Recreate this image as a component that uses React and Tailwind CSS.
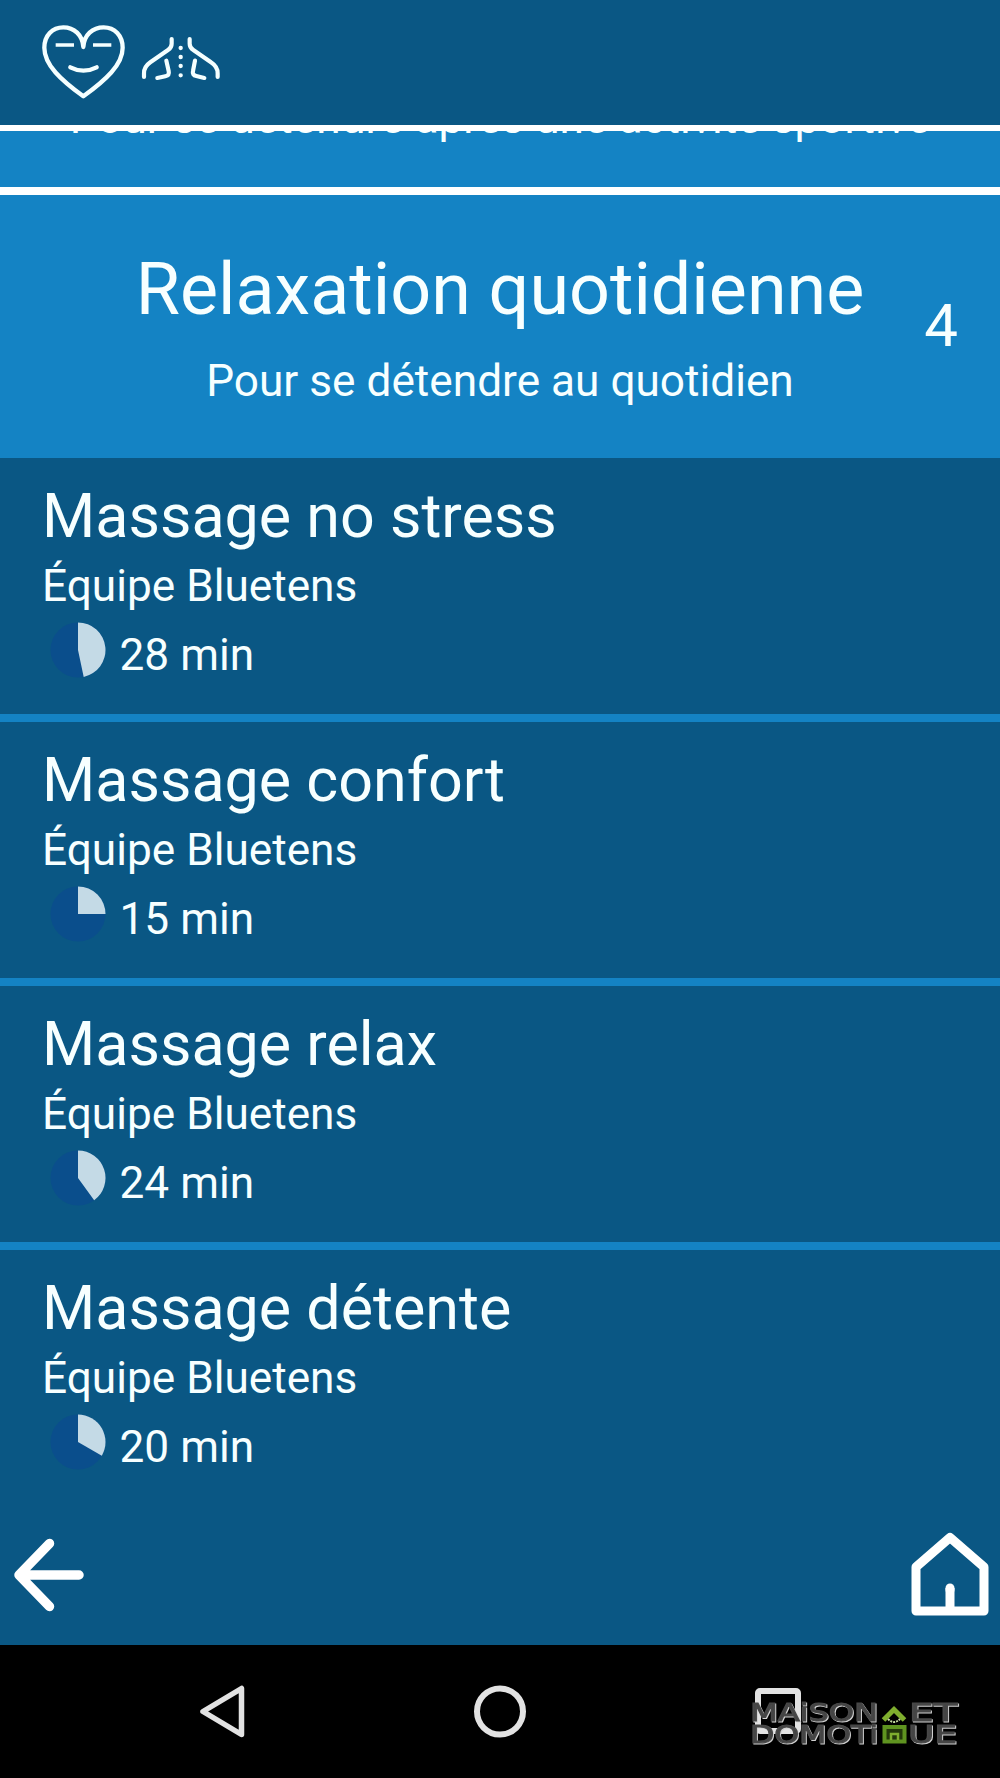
import React from 'react';

const programs = [
  { name: 'Massage no stress', author: 'Équipe Bluetens', minutes: 28 },
  { name: 'Massage confort', author: 'Équipe Bluetens', minutes: 15 },
  { name: 'Massage relax', author: 'Équipe Bluetens', minutes: 24 },
  { name: 'Massage détente', author: 'Équipe Bluetens', minutes: 20 },
];

// Share of an hour, starting at twelve o'clock
const DurationPie = ({ minutes }) => {
  const angle = (minutes / 60) * Math.PI * 2;
  const x = 28 + 27.5 * Math.sin(angle);
  const y = 28 - 27.5 * Math.cos(angle);
  return (
    <svg viewBox="0 0 56 56" className="w-14 h-14 shrink-0">
      <circle cx="28" cy="28" r="27.5" fill="#0a4e8c" />
      <path d={`M28 28V0.5A27.5 27.5 0 0 1 ${x} ${y}Z`} fill="#c4dae6" />
    </svg>
  );
};

const HeartIcon = () => (
  <svg
    viewBox="60 70 260 235"
    className="w-[86.67px] h-[78.33px]"
    fill="none"
    stroke="#f5ffff"
    strokeWidth="13"
    strokeLinecap="round"
    strokeLinejoin="round"
  >
    <path d="M190 142C188 106 162 83 130 83C97 83 73 108 73 144C73 196 124 242 190 290C256 242 308 196 308 144C308 108 284 83 251 83C218 83 192 106 190 142Z" />
    <path d="M112 136H157M224 136H269" strokeLinecap="square" strokeWidth="10" />
    <path d="M151 203Q190 223 230 203" />
  </svg>
);

const BackIcon = () => (
  <svg
    viewBox="360 105 245 140"
    className="w-[81.67px] h-[46.67px]"
    fill="none"
    stroke="#f5ffff"
    strokeWidth="12.5"
    strokeLinecap="round"
    strokeLinejoin="round"
  >
    <path d="M455 117V131Q455 143 444 150L391 187Q372 200 372 220V231" />
    <path d="M439 182L446 213Q449 226 436 229L412 234" />
    <path d="M509 117V131Q509 143 520 150L573 187Q593 200 593 220V231" />
    <path d="M525 182L519 213Q516 225 529 228L553 234" />
    <path d="M482 144h.1M482 171h.1M482 198h.1M482 226h.1" strokeWidth="13" />
  </svg>
);

const ProgramRow = ({ program }) => (
  <li className="h-[264px] pt-[23px] pl-[42px] border-b-8 border-[#1483c4] last:border-b-0">
    <h2 className="text-[61px] leading-[71px]">{program.name}</h2>
    <p className="mt-2 text-[44.200px] leading-[53px]">{program.author}</p>
    <div className="mt-[9px] flex items-start pl-2">
      <DurationPie minutes={program.minutes} />
      <span className="mt-[7px] ml-[13.500px] text-[44.200px] leading-[53px]">{program.minutes} min</span>
    </div>
  </li>
);

const Watermark = () => (
  <svg
    viewBox="748 1698 214 50"
    className="absolute left-[748px] top-[53px] w-[214px] h-[50px] font-['DejaVu_Sans']"
  >
    <g fontSize="24" fill="#444" stroke="#484848" strokeWidth="1.1" className="drop-shadow-[1px_1px_0_#d0d0d0]">
      <text x="750" y="1720.5" textLength="128" lengthAdjust="spacingAndGlyphs">MAiSON</text>
      <text x="909" y="1720.5" textLength="48" lengthAdjust="spacingAndGlyphs">ET</text>
      <text x="750" y="1743" textLength="128" lengthAdjust="spacingAndGlyphs">DOMOTi</text>
      <text x="908" y="1743" textLength="49" lengthAdjust="spacingAndGlyphs">UE</text>
    </g>
    <g fill="none" stroke="#7fae2e" strokeWidth="4">
      <path d="M883.500 1720L894 1709.500L904.500 1720" strokeWidth="5" />
      <path d="M888 1719Q894 1725 900 1719" stroke="#c4d9a0" strokeWidth="2" strokeDasharray="2 1" />
      <rect x="884.500" y="1727" width="20" height="14.500" fill="#24380b" stroke="#5f9320" />
      <path d="M891 1740V1734H898V1740" strokeWidth="2.5" />
    </g>
  </svg>
);

const App = () => {
  return (
    <div className="w-[1000px] h-[1778px] flex flex-col overflow-hidden bg-[#0a5784] text-[#f7ffff] font-['Roboto',sans-serif]">
      <header className="h-[125px] shrink-0 flex items-start pt-[23px] pl-10">
        <HeartIcon />
        <div className="pt-3 pl-[13.33px]">
          <BackIcon />
        </div>
      </header>

      {/* Previous category, scrolled under the header */}
      <section className="h-[70px] shrink-0 border-t-[6px] border-b-8 border-white bg-[#1483c4] overflow-hidden">
        <p className="-mt-[39px] text-center text-[44.200px] leading-[53px] whitespace-nowrap">
          Pour se détendre après une activité sportive
        </p>
      </section>

      <section className="h-[263px] shrink-0 grid grid-cols-[110px_1fr_110px] items-center bg-[#1483c4]">
        <div />
        <div className="pt-[3px] text-center whitespace-nowrap">
          <h1 className="text-[71.800px] leading-[84px]">Relaxation quotidienne</h1>
          <p className="mt-[23px] text-[44.200px] leading-[53px]">Pour se détendre au quotidien</p>
        </div>
        <span className="pr-[42px] pb-px text-right text-[60px] leading-[70px]">4</span>
      </section>

      <ul className="h-[1048px] shrink-0">
        {programs.map((program) => (
          <ProgramRow key={program.name} program={program} />
        ))}
      </ul>

      <nav className="flex-1 flex items-start justify-between pt-[22px] pl-[10px] pr-[8px]">
        <svg viewBox="0 0 76 84" className="w-[76px] h-[84px] mt-[4px]" fill="none" stroke="#fff" strokeWidth="9.5" strokeLinecap="round" strokeLinejoin="round">
          <path d="M39.500 11.500L9 43L39.500 74.500M9 43H69" />
        </svg>
        <svg viewBox="0 0 84 90" className="w-[84px] h-[90px]" fill="none" stroke="#fff" strokeWidth="9" strokeLinejoin="round">
          <path d="M8 83V39L42 9.500L76 39V83ZM42 83V60" />
          <path d="M42 62V60" strokeLinecap="round" />
        </svg>
      </nav>

      {/* Android navigation bar */}
      <footer className="relative h-[133px] shrink-0 bg-black">
        <div className="flex items-start pt-[40px] pl-[198px]">
          <svg viewBox="0 0 50 54" className="w-[50px] h-[54px]" fill="none" stroke="#e2e2e2" strokeWidth="5.5" strokeLinejoin="round">
            <path d="M5 26.500L43.500 3.500V49.500Z" />
          </svg>
          <svg viewBox="0 0 54 54" className="w-[54px] h-[54px] ml-[225px]" fill="none" stroke="#e2e2e2" strokeWidth="6">
            <circle cx="27" cy="26.500" r="23" />
          </svg>
          <svg viewBox="0 0 54 54" className="w-[54px] h-[54px] ml-[224px]" fill="none" stroke="#e2e2e2" strokeWidth="6">
            <rect x="7" y="6" width="40" height="40" rx="2" />
          </svg>
        </div>
        <Watermark />
      </footer>
    </div>
  );
};

export default App;
